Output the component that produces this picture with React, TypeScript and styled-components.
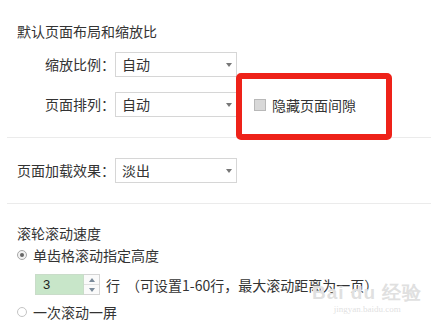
import React from "react";
import styled, { createGlobalStyle } from "styled-components";

const Global = createGlobalStyle`
  html, body { margin: 0; padding: 0; background: #fff; }
  body {
    font-family: "Noto Sans CJK SC", "Microsoft YaHei", sans-serif;
    font-size: 14px;
    color: #333;
  }
`;

const Page = styled.div`
  position: relative;
  width: 431px;
  height: 324px;
  overflow: hidden;
  background: #fff;
`;

const Section = styled.div<{ $top: number; $bottom: number }>`
  padding: ${(p) => p.$top}px 0 ${(p) => p.$bottom}px 17px;
  display: flex;
  flex-direction: column;
`;

const Title = styled.div`
  font-size: 14px;
  line-height: 20px;
  height: 20px;
  color: #333;
  white-space: nowrap;
`;

const Row = styled.div<{ $mt?: number }>`
  display: flex;
  align-items: center;
  margin-top: ${(p) => p.$mt ?? 0}px;
  height: 25px;
`;

const Label = styled.div`
  width: 98px;
  text-align: right;
  line-height: 25px;
  white-space: nowrap;
  color: #333;
`;

const Select = styled.div`
  position: relative;
  box-sizing: border-box;
  width: 122px;
  height: 25px;
  border: 1px solid #d6d6d6;
  background: #fff;
  padding-left: 6px;
  line-height: 23px;
  color: #333;
  &::after {
    content: "";
    position: absolute;
    right: 4px;
    top: 10px;
    border-left: 3.5px solid transparent;
    border-right: 3.5px solid transparent;
    border-top: 4px solid #777;
  }
`;

const CheckWrap = styled.label`
  display: flex;
  align-items: center;
  margin-left: 17px;
  gap: 6px;
  white-space: nowrap;
  color: #333;
`;

const Checkbox = styled.span`
  box-sizing: border-box;
  width: 12px;
  height: 12px;
  border: 1px solid #b8b8b8;
  background: #d8d8d8;
`;

const Divider = styled.div`
  height: 1px;
  margin-left: 7px;
  background: #ebebeb;
`;

const RadioRow = styled.div<{ $mt?: number }>`
  display: flex;
  align-items: center;
  height: 22px;
  margin-top: ${(p) => p.$mt ?? 0}px;
  gap: 6px;
  white-space: nowrap;
`;

const Radio = styled.span<{ $on?: boolean }>`
  position: relative;
  box-sizing: border-box;
  width: 10px;
  height: 10px;
  border-radius: 50%;
  border: 1px solid ${(p) => (p.$on ? "#a8a8a8" : "#c4c4c4")};
  background: ${(p) => (p.$on ? "#f2f2f2" : "#fff")};
  &::after {
    content: "";
    display: ${(p) => (p.$on ? "block" : "none")};
    position: absolute;
    left: 2px;
    top: 2px;
    width: 4px;
    height: 4px;
    border-radius: 50%;
    background: #666;
  }
`;

const SpinRow = styled.div`
  display: flex;
  align-items: center;
  margin-top: 8px;
  margin-left: 18px;
  height: 21px;
  white-space: nowrap;
`;

const SpinInput = styled.div`
  box-sizing: border-box;
  width: 49px;
  height: 21px;
  background: #c8e6c9;
  border: 1px solid #c9dcc9;
  padding-left: 7px;
  line-height: 19px;
  font-family: "Liberation Sans", Arial, sans-serif;
  font-size: 13px;
  color: #222;
`;

const SpinButtons = styled.div`
  box-sizing: border-box;
  width: 16px;
  height: 21px;
  border: 1px solid #d4d4d4;
  border-left: none;
  background: #fafafa;
  display: flex;
  flex-direction: column;
`;

const SpinBtn = styled.div<{ $down?: boolean }>`
  flex: 1;
  display: flex;
  align-items: center;
  justify-content: center;
  border-top: ${(p) => (p.$down ? "1px solid #e0e0e0" : "none")};
  &::before {
    content: "";
    border-left: 3.5px solid transparent;
    border-right: 3.5px solid transparent;
    ${(p) =>
      p.$down ? "border-top: 4px solid #7a8a9a;" : "border-bottom: 4px solid #7a8a9a;"}
  }
`;

const Unit = styled.span`
  margin-left: 6px;
  color: #333;
`;

const Hint = styled.span`
  margin-left: 6px;
  color: #333;
`;

const Annotation = styled.div`
  position: absolute;
  left: 236px;
  top: 73px;
  width: 156px;
  height: 67px;
  box-sizing: border-box;
  border: 6px solid #ee2219;
  border-radius: 5px;
  pointer-events: none;
`;

const Watermark = styled.div`
  position: absolute;
  left: 312px;
  top: 283px;
  display: flex;
  flex-direction: column;
  align-items: center;
  pointer-events: none;
  color: rgba(210, 210, 210, 0.7);
  text-shadow: 0 0 1px #fff, 0 0 1px #fff;
`;

const MarkMain = styled.div`
  font-family: "Liberation Sans", Arial, sans-serif;
  font-size: 19px;
  font-weight: bold;
  line-height: 20px;
  letter-spacing: 1px;
  white-space: nowrap;
`;

const MarkSub = styled.div`
  font-family: "Liberation Serif", serif;
  font-size: 9px;
  line-height: 12px;
  white-space: nowrap;
`;

export default function App() {
  return (
    <Page>
      <Global />
      <Section $top={21} $bottom={20}>
        <Title>默认页面布局和缩放比</Title>
        <Row $mt={11}>
          <Label>缩放比例：</Label>
          <Select>自动</Select>
        </Row>
        <Row $mt={15}>
          <Label>页面排列：</Label>
          <Select>自动</Select>
          <CheckWrap>
            <Checkbox />
            隐藏页面间隙
          </CheckWrap>
        </Row>
      </Section>
      <Divider />
      <Section $top={20} $bottom={20}>
        <Row>
          <Label>页面加载效果：</Label>
          <Select>淡出</Select>
        </Row>
      </Section>
      <Divider />
      <Section $top={19} $bottom={0}>
        <Title>滚轮滚动速度</Title>
        <RadioRow $mt={1}>
          <Radio $on />
          单齿格滚动指定高度
        </RadioRow>
        <SpinRow>
          <SpinInput>3</SpinInput>
          <SpinButtons>
            <SpinBtn />
            <SpinBtn $down />
          </SpinButtons>
          <Unit>行</Unit>
          <Hint>（可设置1-60行，最大滚动距离为一页）</Hint>
        </SpinRow>
        <RadioRow $mt={6}>
          <Radio />
          一次滚动一屏
        </RadioRow>
      </Section>
      <Annotation />
      <Watermark>
        <MarkMain>Bai du 经验</MarkMain>
        <MarkSub>jingyan.baidu.com</MarkSub>
      </Watermark>
    </Page>
  );
}
